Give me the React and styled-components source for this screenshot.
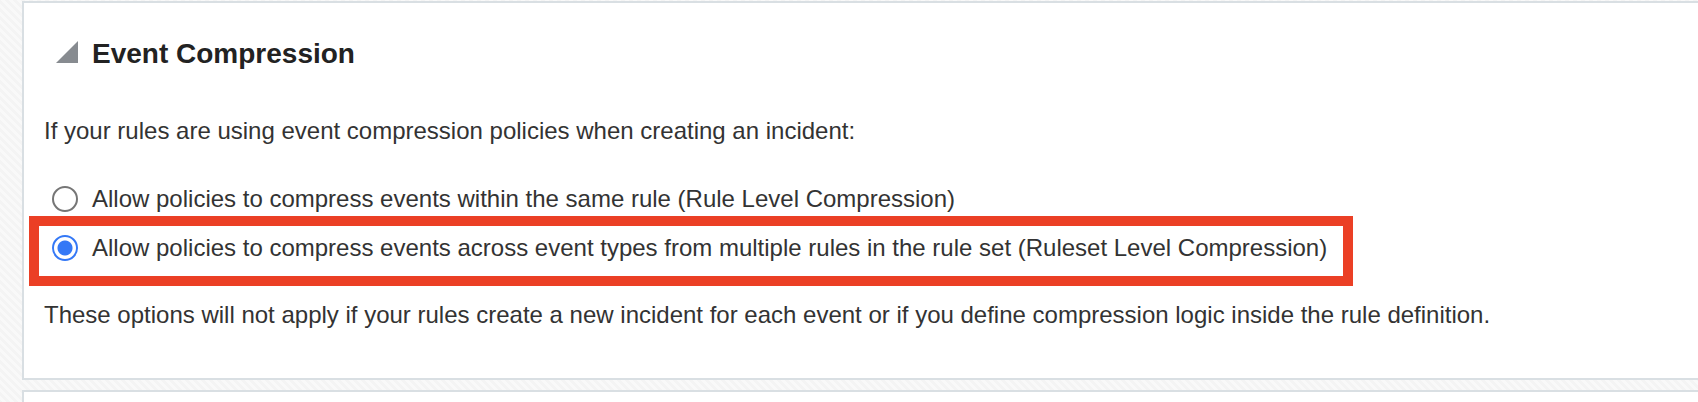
import React, { useState } from "react";
import styled, { createGlobalStyle, css } from "styled-components";

const GlobalStyle = createGlobalStyle`
  *, *::before, *::after { box-sizing: border-box; }
  body {
    margin: 0;
    overflow-x: hidden;
    color: #333333;
    font: 24px/28px "Liberation Sans", Arial, Helvetica, sans-serif;
    background: linear-gradient(45deg, #f9f9f9 25%, #f4f4f4 25% 50%, #f9f9f9 50% 75%, #f4f4f4 75%) 0 0 / 8px 8px;
  }
`;

const Page = styled.main`
  display: flex;
  flex-direction: column;
  gap: 10px;
  min-height: 100vh;
  padding: 1px 0 0 22px;
`;

const Panel = styled.section`
  flex: ${({ $fill }) => ($fill ? "1 0 12px" : "none")};
  padding: ${({ $fill }) => ($fill ? "0" : "33px 20px 49px")};
  border: 2px solid #d9dfe3;
  border-right: 0;
  ${({ $fill }) => $fill && "border-bottom: 0;"}
  background: #ffffff;
`;

const Heading = styled.h2`
  margin: 0 0 45px;
  font-size: 28px;
  line-height: 36px;
`;

const Disclosure = styled.button`
  display: flex;
  align-items: baseline;
  gap: 14px;
  padding: 0 0 0 12px;
  border: 0;
  background: none;
  color: #222222;
  font: inherit;
  cursor: pointer;
`;

const Triangle = styled.svg`
  flex: none;
  width: 22px;
  height: 22px;
  fill: #878b90;
`;

const Text = styled.p`
  margin: 0;
`;

const Options = styled.fieldset`
  display: flex;
  flex-direction: column;
  align-items: flex-start;
  gap: 21px;
  margin: 0;
  padding: 40px 0 39px 8px;
  border: 0;
  min-width: 0;
`;

const Option = styled.label`
  position: relative;
  display: flex;
  align-items: center;
  gap: 14px;

  ${({ $highlighted }) =>
    $highlighted &&
    css`
      &::after {
        content: "";
        position: absolute;
        inset: -18px -26px -24px -23px;
        border: 10px solid #eb3f25;
        pointer-events: none;
      }
    `}
`;

const Radio = styled.input`
  flex: none;
  appearance: none;
  width: 26px;
  height: 26px;
  margin: 0;
  border: 2px solid #767676;
  border-radius: 50%;
  background: #ffffff;

  &:checked {
    border-color: #3478f6;
    background: radial-gradient(circle, #3478f6 0 7px, #ffffff 8px);
  }
`;

const OPTIONS = [
  { value: "rule", label: "Allow policies to compress events within the same rule (Rule Level Compression)" },
  {
    value: "ruleset",
    label:
      "Allow policies to compress events across event types from multiple rules in the rule set (Ruleset Level Compression)",
    highlighted: true,
  },
];

export default function App() {
  const [open, setOpen] = useState(true);
  const [level, setLevel] = useState("ruleset");

  return (
    <>
      <GlobalStyle />
      <Page>
        <Panel>
          <Heading>
            <Disclosure type="button" aria-expanded={open} onClick={() => setOpen(!open)}>
              <Triangle viewBox="0 0 22 22" aria-hidden="true">
                <path d="M22 0V22H0Z" />
              </Triangle>
              Event Compression
            </Disclosure>
          </Heading>
          {open && (
            <>
              <Text id="compression-intro">
                If your rules are using event compression policies when creating an incident:
              </Text>
              <Options aria-labelledby="compression-intro">
                {OPTIONS.map(({ value, label, highlighted }) => (
                  <Option key={value} $highlighted={highlighted}>
                    <Radio
                      type="radio"
                      name="compression-level"
                      value={value}
                      checked={level === value}
                      onChange={() => setLevel(value)}
                    />
                    {label}
                  </Option>
                ))}
              </Options>
              <Text>
                These options will not apply if your rules create a new incident for each event or if you define
                compression logic inside the rule definition.
              </Text>
            </>
          )}
        </Panel>
        <Panel $fill />
      </Page>
    </>
  );
}
